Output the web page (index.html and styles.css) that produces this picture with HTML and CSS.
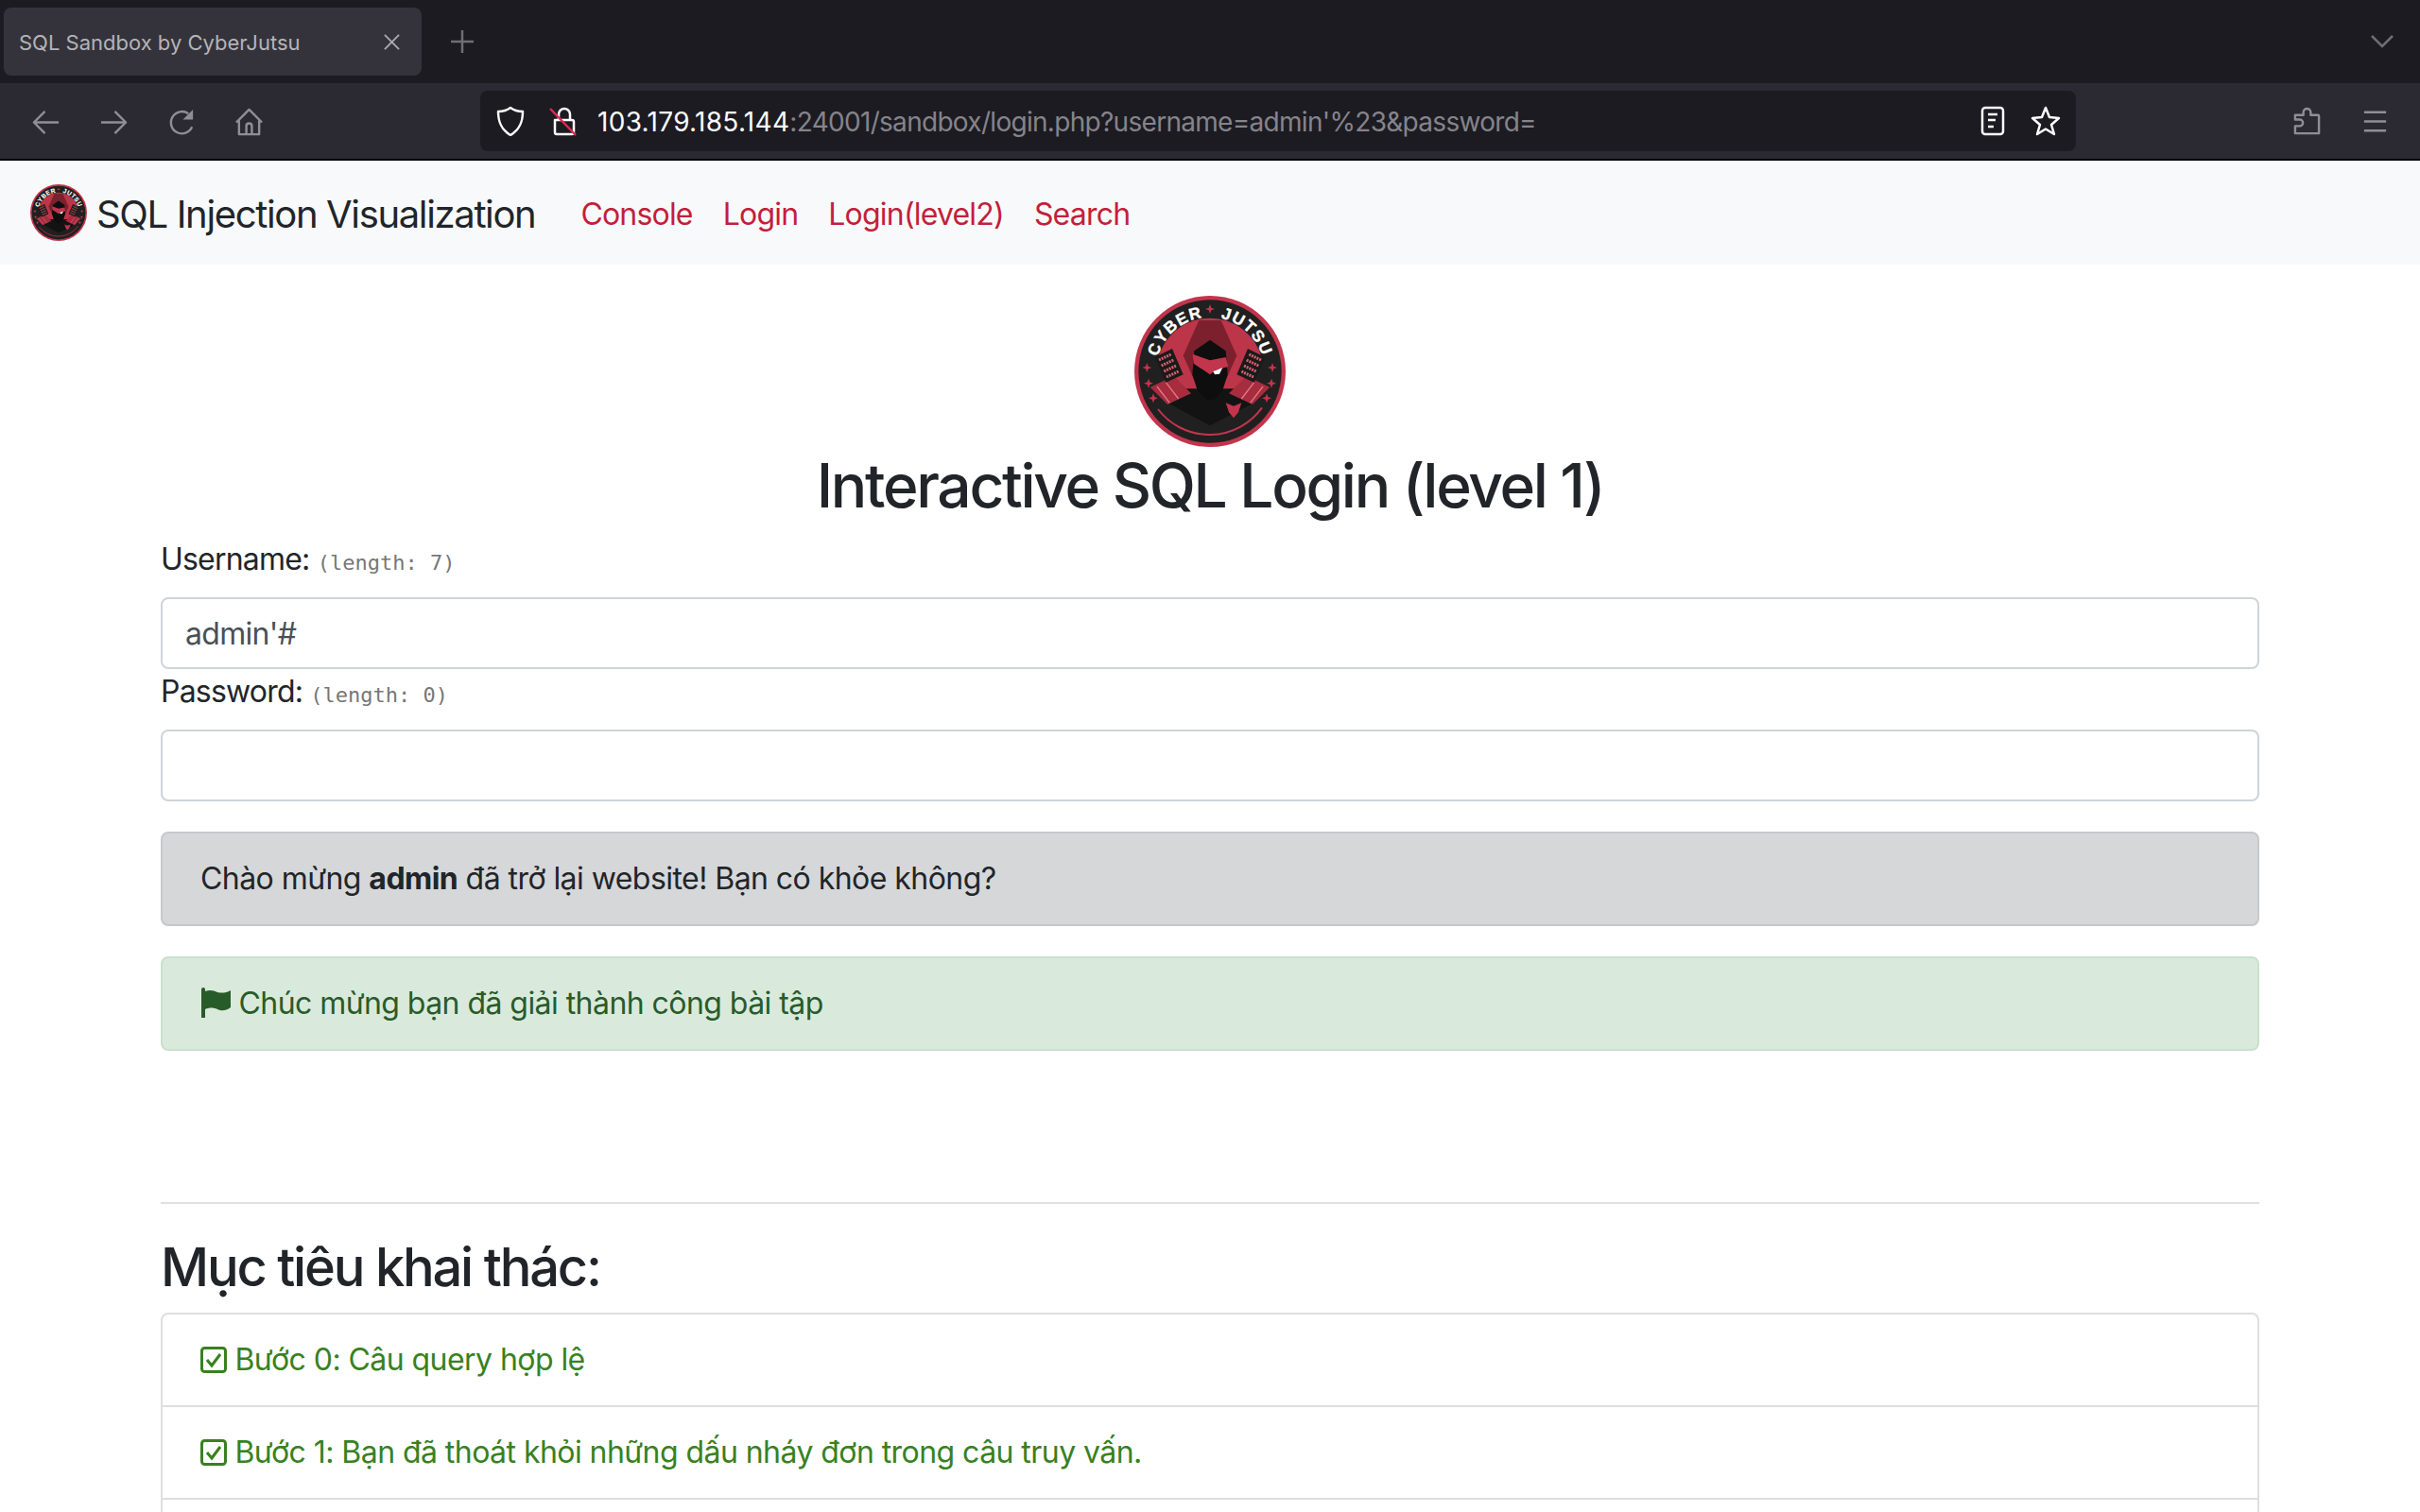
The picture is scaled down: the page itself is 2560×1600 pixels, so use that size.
FILE: index.html
```html
<!DOCTYPE html>
<html lang="en">
<head>
  <meta charset="UTF-8">
  <title>SQL Sandbox by CyberJutsu</title>
  <link rel="stylesheet" href="styles.css">
</head>
<body>
  <svg class="defs" width="0" height="0">
    <defs>
      <path id="ringText" d="M 68 240 A 172 172 0 0 1 412 240"/>
      <path id="shuriken" d="M0 -15 L4 -4 L15 0 L4 4 L0 15 L-4 4 L-15 0 L-4 -4 Z" fill="#c2354c"/>
      <symbol id="logo" viewBox="0 0 480 480">
        <circle cx="240" cy="240" r="240" fill="#c2354c"/>
        <circle cx="240" cy="240" r="227" fill="#202020"/>
        <path d="M75 200 A 170 170 0 0 1 405 200 L365 300 L115 300 Z" fill="#bd3549"/>
        <path d="M205 78 L275 78 L325 190 L280 290 L200 290 L155 190 Z" fill="#7c202d"/>
        <path d="M105 340 L165 295 L315 295 L380 340 L240 412 Z" fill="#131313"/>
        <path d="M240 140 L290 175 L296 250 L280 300 L252 330 L228 330 L200 300 L184 250 L190 175 Z" fill="#0e0e0e"/>
        <path d="M185 185 L240 205 L290 195 L298 225 L260 235 L240 250 L188 215 Z" fill="#c2354c"/>
        <path d="M250 240 L280 228 L270 248 L255 250 Z" fill="#fff"/>

        <path d="M50 290 L125 255 L180 310 L105 345 Z" fill="#a62c3e"/>
        <path d="M430 290 L355 255 L300 310 L375 345 Z" fill="#a62c3e"/>
        <path d="M72 288 L112 340 M100 275 L140 327" stroke="#e07a86" stroke-width="4"/>
        <path d="M408 288 L368 340 M380 275 L340 327" stroke="#e07a86" stroke-width="4"/>
        <path d="M65 195 L120 168 L155 250 L100 275 Z" fill="#1a1a1a"/>
        <path d="M415 195 L360 168 L325 250 L380 275 Z" fill="#1a1a1a"/>
        <g class="keys">
          <path d="M78 204 L116 186 M86 222 L124 204 M94 240 L132 222 M102 258 L140 240"/>
          <path d="M402 204 L364 186 M394 222 L356 204 M386 240 L348 222 M378 258 L340 240"/>
        </g>

        <use href="#shuriken" x="40" y="228"/>
        <use href="#shuriken" x="45" y="278"/>
        <use href="#shuriken" x="60" y="325"/>
        <use href="#shuriken" x="438" y="228"/>
        <use href="#shuriken" x="435" y="278"/>
        <use href="#shuriken" x="420" y="325"/>
        <use href="#shuriken" x="240" y="42"/>
        <path d="M290 340 L315 350 L340 340 L330 370 L315 388 L300 370 Z" fill="#c2354c"/>
        <path d="M75 360 A 205 205 0 0 0 405 355" fill="none" stroke="#c2354c" stroke-width="6"/>
        <text class="logo-text"><textPath href="#ringText" startOffset="50%" text-anchor="middle">CYBER&#160;&#160;&#160;JUTSU</textPath></text>
      </symbol>
    </defs>
  </svg>

  <div class="tabbar">
    <div class="tab">
      <span class="tab-title">SQL Sandbox by CyberJutsu</span>
      <svg class="tab-close" viewBox="0 0 18 18"><path d="M1 1 L17 17 M17 1 L1 17"/></svg>
    </div>
    <svg class="new-tab" viewBox="0 0 24 24"><path d="M12 0 V24 M0 12 H24"/></svg>
    <svg class="tab-list" viewBox="0 0 24 14"><path d="M1 1 L12 12 L23 1"/></svg>
  </div>

  <div class="toolbar">
    <div class="nav-btns">
      <svg class="tool-icon" viewBox="0 0 32 32"><path d="M30 16 H3 M15 4 L3 16 L15 28"/></svg>
      <svg class="tool-icon" viewBox="0 0 32 32"><path d="M2 16 H29 M17 4 L29 16 L17 28"/></svg>
      <svg class="tool-icon" viewBox="0 0 32 32"><path d="M27 21 A 12 12 0 1 1 23 6.500"/><path class="solid" d="M28 2 V13 H17 Z"/></svg>
      <svg class="tool-icon home" viewBox="0 0 32 32"><path d="M2 16 L16 2 L30 16 M5 14 V29 H27 V14 M13 29 V20 A 3 3 0 0 1 19 20 V29"/></svg>
    </div>
    <div class="urlbar">
      <svg class="url-icon" viewBox="0 0 32 32"><path d="M16 2 C20 5 24 6 29 6 C29 17 26 25 16 31 C6 25 3 17 3 6 C8 6 12 5 16 2 Z"/></svg>
      <svg class="url-icon lock" viewBox="0 0 32 32"><path d="M7 15 H25 A 2 2 0 0 1 27 17 V28 A 2 2 0 0 1 25 30 H9 A 2 2 0 0 1 7 28 Z M11 15 V9 A 6 6 0 0 1 23 9 V15"/><path class="slash" d="M2 3 L29 31"/></svg>
      <div class="url-text"><span class="url-host">103.179.185.144</span>:24001/sandbox/login.php?username=admin'%23&amp;password=</div>
      <svg class="url-icon reader" viewBox="0 0 32 32"><rect x="5" y="2" width="22" height="28" rx="3"/><path d="M11 9 H21 M11 15 H19 M11 22 H17"/></svg>
      <svg class="url-icon star" viewBox="0 0 32 32"><path d="M16 2 L20 12 L30 13 L22 20 L25 30 L16 24.500 L7 30 L10 20 L2 13 L12 12 Z"/></svg>
    </div>
    <div class="tool-right">
      <svg class="tool-icon" viewBox="0 0 32 32"><path d="M3 29 V21 H8 A 3.500 3.500 0 0 0 8 14 H3 V9 H12 V6 A 4 4 0 0 1 20 6 V9 H28 A 1 1 0 0 1 29 10 V29 Z"/></svg>
      <svg class="tool-icon" viewBox="0 0 32 32"><path d="M4 6 H28 M4 16 H28 M4 26 H28"/></svg>
    </div>
  </div>

  <nav class="navbar">
    <a class="brand" href="#"><svg class="brand-logo"><use href="#logo"/></svg><span class="brand-text">SQL Injection Visualization</span></a>
    <a class="nav-link" href="#">Console</a>
    <a class="nav-link" href="#">Login</a>
    <a class="nav-link" href="#">Login(level2)</a>
    <a class="nav-link" href="#">Search</a>
  </nav>

  <div class="container">
    <div class="hero">
      <svg class="hero-logo"><use href="#logo"/></svg>
      <h1>Interactive SQL Login (level 1)</h1>
    </div>

    <form>
      <label class="field-label">Username: <span class="len">(length: 7)</span></label>
      <input class="field" type="text" value="admin'#">
      <label class="field-label">Password: <span class="len">(length: 0)</span></label>
      <input class="field" type="text" value="">
    </form>

    <div class="alert alert-grey">Chào mừng <b>admin</b> đã trở lại website! Bạn có khỏe không?</div>
    <div class="alert alert-green">
      <svg class="flag" viewBox="0 0 32 32"><path d="M1 2 A 2 2 0 0 1 5 2 V4 C10 2 14 3 18 5 C22 6 27 6 32 3 V21 C27 25 22 25 18 23 C14 21 9 21 5 23 V32 H1 Z"/></svg>
      Chúc mừng bạn đã giải thành công bài tập
    </div>

    <hr class="divider">
    <h2>Mục tiêu khai thác:</h2>

    <ul class="goals">
      <li><svg class="check" viewBox="0 0 28 28"><rect x="1.500" y="1.500" width="25" height="25" rx="3"/><path d="M7 14 L12 20 L21 8"/></svg> Bước 0: Câu query hợp lệ</li>
      <li><svg class="check" viewBox="0 0 28 28"><rect x="1.500" y="1.500" width="25" height="25" rx="3"/><path d="M7 14 L12 20 L21 8"/></svg> Bước 1: Bạn đã thoát khỏi những dấu nháy đơn trong câu truy vấn.</li>
      <li></li>
    </ul>
  </div>
</body>
</html>
```

FILE: styles.css
```css
html, body {
  margin: 0;
  height: 1600px;
  overflow: hidden;
}
body {
  font-family: Inter, "Noto Sans", sans-serif;
  font-size: 32px;
  line-height: 48px;
  letter-spacing: -0.55px;
  color: #212529;
  background: #fff;
}
a {
  text-decoration: none;
}
.defs {
  position: absolute;
}
.logo-text {
  font-family: "Liberation Sans", sans-serif;
  font-size: 52px;
  font-weight: 700;
  letter-spacing: 4px;
  fill: #fff;
  stroke: #fff;
  stroke-width: 1;
}
.keys {
  fill: none;
  stroke: #d8606f;
  stroke-width: 9;
  stroke-dasharray: 6 3;
}

/* browser chrome */
.tabbar {
  height: 88px;
  box-sizing: border-box;
  padding: 8px 28px 8px 4px;
  display: flex;
  align-items: center;
  background: #1c1b22;
}
.tab {
  width: 442px;
  height: 72px;
  box-sizing: border-box;
  padding: 0 23px 0 16px;
  display: flex;
  align-items: center;
  justify-content: space-between;
  background: #34333b;
  border-radius: 8px;
}
.tab-title {
  padding-top: 2px;
  font-size: 22px;
  letter-spacing: 0;
  color: #b4b3b8;
}
.tab-close {
  width: 17px;
  height: 17px;
  fill: none;
  stroke: #aaa9ae;
  stroke-width: 2;
}
.new-tab {
  width: 24px;
  height: 24px;
  margin-left: 31px;
  fill: none;
  stroke: #6f6e74;
  stroke-width: 2.500;
}
.tab-list {
  width: 24px;
  height: 14px;
  margin-left: auto;
  fill: none;
  stroke: #6f6e74;
  stroke-width: 2.500;
}
.toolbar {
  height: 80px;
  box-sizing: border-box;
  padding: 8px 0;
  display: flex;
  align-items: center;
  background: #2b2a33;
}
.nav-btns {
  width: 508px;
  box-sizing: border-box;
  padding: 2px 0 0 33px;
  display: flex;
  gap: 41px;
}
.tool-icon {
  width: 31px;
  height: 31px;
  fill: none;
  stroke: #8f8e94;
  stroke-width: 2.500;
  stroke-linejoin: round;
}
.home {
  margin-left: -1px;
}
.solid {
  fill: #8f8e94;
  stroke: none;
}
.urlbar {
  width: 1688px;
  height: 64px;
  box-sizing: border-box;
  padding: 0 16px;
  display: flex;
  align-items: center;
  background: #1c1b22;
  border-radius: 8px;
}
.url-icon {
  width: 32px;
  height: 32px;
  flex: none;
  fill: none;
  stroke: #fbfbfe;
  stroke-width: 2.500;
  stroke-linejoin: round;
}
.lock {
  margin-left: 24px;
}
.slash {
  stroke: #e22850;
}
.url-text {
  flex: 1;
  margin-left: 20px;
  padding-top: 2px;
  font-size: 28px;
  letter-spacing: -0.7px;
  color: #85848a;
  white-space: nowrap;
}
.url-host {
  letter-spacing: 0.3px;
  color: #fbfbfe;
}
.reader {
  margin-right: 24px;
}
.tool-right {
  display: flex;
  gap: 41px;
  padding-left: 229px;
}

/* page */
.navbar {
  height: 112px;
  box-sizing: border-box;
  padding: 0 32px;
  display: flex;
  align-items: center;
  gap: 32px;
  background: #f8f9fa;
  border-top: 2px solid #000;
}
.brand {
  display: flex;
  align-items: center;
  gap: 10px;
  margin-right: 16px;
  font-size: 40px;
  letter-spacing: -1.35px;
  color: #212529;
}
.brand-logo {
  width: 60px;
  height: 60px;
}
.brand-text {
  padding-top: 4px;
}
.nav-link {
  padding-top: 4px;
  letter-spacing: -0.8px;
  color: #c41e3a;
}
.container {
  width: 2220px;
  margin: 0 auto;
}
.hero {
  padding-top: 33px;
  text-align: center;
}
.hero-logo {
  display: block;
  width: 160px;
  height: 160px;
  margin: 0 auto;
}
h1 {
  margin: 2px 0 16px;
  font-size: 64px;
  line-height: 77px;
  font-weight: 500;
  letter-spacing: -2.3px;
}
.field-label {
  display: block;
  margin-bottom: 16px;
  letter-spacing: -0.8px;
}
.len {
  font-family: "DejaVu Sans Mono", monospace;
  font-size: 22px;
  line-height: 1;
  letter-spacing: 0;
  color: #777;
}
.field {
  display: block;
  width: 100%;
  height: 76px;
  box-sizing: border-box;
  padding: 0 24px;
  font: inherit;
  letter-spacing: -0.7px;
  color: #495057;
  border: 2px solid #ced4da;
  border-radius: 8px;
  outline: none;
}
.alert {
  height: 100px;
  box-sizing: border-box;
  margin-top: 32px;
  padding: 24px 40px;
  border: 2px solid transparent;
  border-radius: 8px;
}
.alert-grey {
  background: #d6d7d9;
  border-color: #c6c8ca;
}
.alert-green {
  color: #285b2a;
  background: #d9eadc;
  border-color: #c9e0cd;
}
.flag {
  width: 32px;
  height: 32px;
  vertical-align: -4px;
  fill: #285b2a;
}
.divider {
  height: 2px;
  margin: 160px 0 0;
  border: 0;
  background: #e0e0e0;
}
h2 {
  margin: 34px 0 14px;
  font-size: 56px;
  line-height: 67px;
  font-weight: 500;
  letter-spacing: -2.2px;
}
.goals {
  margin: 0;
  padding: 0;
  list-style: none;
  border: 2px solid #dfdfdf;
  border-radius: 8px;
}
.goals li {
  height: 96px;
  box-sizing: border-box;
  padding: 24px 40px;
  color: #38811f;
}
.goals li + li {
  height: 98px;
  border-top: 2px solid #dfdfdf;
}
.check {
  width: 28px;
  height: 28px;
  vertical-align: -3px;
  fill: none;
  stroke: #38811f;
  stroke-width: 3;
}
```
